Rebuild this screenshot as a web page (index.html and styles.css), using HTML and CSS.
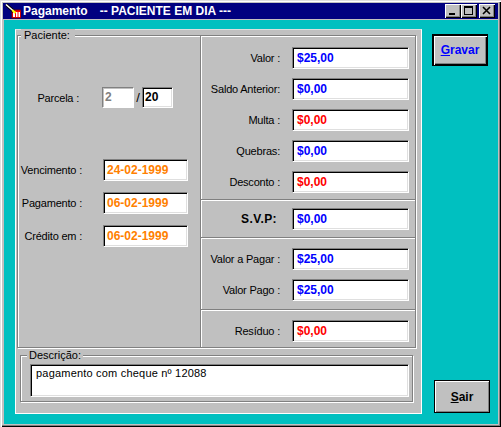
FILE: index.html
```html
<!DOCTYPE html>
<html lang="pt">
<head>
<meta charset="utf-8">
<title>Pagamento</title>
<link rel="stylesheet" href="styles.css">
</head>
<body>
<div class="window">
  <div class="titlebar">
    <svg class="app-icon" width="16" height="16" viewBox="0 0 16 16">
      <rect x="7" y="7" width="9" height="8" fill="#ff0000"/>
      <rect x="7" y="7" width="9" height="8" fill="none" stroke="#800000" stroke-width="0.8"/>
      <rect x="8" y="9" width="2" height="5" fill="#fff"/>
      <rect x="11" y="9" width="1.5" height="5" fill="#fff"/>
      <rect x="13.5" y="9" width="1.5" height="5" fill="#fff"/>
      <path d="M1 1.5 L9 8.5" stroke="#000" stroke-width="3.2"/>
      <path d="M1 1.5 L9 8.5" stroke="#fff" stroke-width="1.6"/>
      <path d="M7.5 7.2 L10.5 10" stroke="#ffff00" stroke-width="2.2"/>
    </svg>
    <span class="title">Pagamento</span>
    <span class="title subtitle">-- PACIENTE EM DIA ---</span>
    <div class="caption-buttons">
      <span class="cap-btn"><svg width="16" height="14" viewBox="0 0 16 14"><rect x="4" y="9" width="6" height="2" fill="#000"/></svg></span>
      <span class="cap-btn"><svg width="16" height="14" viewBox="0 0 16 14"><rect x="3.5" y="2.5" width="8" height="8" fill="none" stroke="#000"/><rect x="3" y="2" width="9" height="2" fill="#000"/></svg></span>
      <span class="cap-btn close"><svg width="16" height="14" viewBox="0 0 16 14"><path d="M4 3 L11 10 M11 3 L4 10" stroke="#000" stroke-width="1.6"/></svg></span>
    </div>
  </div>
  <div class="client">
    <div class="panel">
      <div class="group paciente">
        <span class="legend">Paciente:</span>
        <div class="left-col">
          <div class="lrow parcela-row">
            <span class="lbl">Parcela :</span>
            <div class="field small disabled">2</div>
            <span class="slash">/</span>
            <div class="field small">20</div>
          </div>
          <div class="lrow date-row vence">
            <span class="lbl">Vencimento :</span>
            <div class="field date orange">24-02-1999</div>
          </div>
          <div class="lrow date-row">
            <span class="lbl">Pagamento :</span>
            <div class="field date orange">06-02-1999</div>
          </div>
          <div class="lrow date-row">
            <span class="lbl">Crédito em :</span>
            <div class="field date orange">06-02-1999</div>
          </div>
        </div>
        <div class="right-col">
          <div class="sec sec1">
            <div class="frow"><span class="lbl">Valor :</span><div class="field money blue">$25,00</div></div>
            <div class="frow"><span class="lbl">Saldo Anterior:</span><div class="field money blue">$0,00</div></div>
            <div class="frow"><span class="lbl">Multa :</span><div class="field money red">$0,00</div></div>
            <div class="frow"><span class="lbl">Quebras:</span><div class="field money blue">$0,00</div></div>
            <div class="frow"><span class="lbl">Desconto :</span><div class="field money red">$0,00</div></div>
          </div>
          <div class="sec sec2">
            <div class="frow"><span class="lbl bold">S.V.P:</span><div class="field money blue">$0,00</div></div>
          </div>
          <div class="sec sec3">
            <div class="frow"><span class="lbl">Valor a Pagar :</span><div class="field money blue">$25,00</div></div>
            <div class="frow"><span class="lbl">Valor Pago :</span><div class="field money blue">$25,00</div></div>
          </div>
          <div class="sec sec4">
            <div class="frow"><span class="lbl">Resíduo :</span><div class="field money red">$0,00</div></div>
          </div>
        </div>
      </div>
      <div class="group descricao">
        <span class="legend">Descrição:</span>
        <div class="memo">pagamento com cheque nº 12088</div>
      </div>
    </div>
    <div class="side">
      <button class="btn gravar"><u>G</u>ravar</button>
      <button class="btn sair"><u>S</u>air</button>
    </div>
  </div>
</div>
</body>
</html>
```
FILE: styles.css
```css
html, body {
  margin: 0;
  padding: 0;
}
body {
  background: #808080;
  font-family: "Liberation Sans", Arial, sans-serif;
  font-size: 11px;
  color: #000;
}
.window {
  width: 501px;
  height: 427px;
  box-sizing: border-box;
  padding: 3px;
  background: #c0c0c0;
  box-shadow: inset 1px 1px 0 #dfdfdf, inset 2px 2px 0 #fff, inset -1px -1px 0 #000, inset -2px -2px 0 #808080;
  display: flex;
  flex-direction: column;
}
.titlebar {
  height: 16px;
  flex: none;
  background: #000080;
  color: #fff;
  display: flex;
  align-items: center;
  padding: 0 3px 0 2px;
}
.app-icon {
  flex: none;
  margin-right: 2px;
}
.title {
  font-weight: bold;
  font-size: 12px;
  line-height: 16px;
  white-space: pre;
}
.subtitle {
  margin-left: 12px;
}
.caption-buttons {
  margin-left: auto;
  display: flex;
}
.cap-btn {
  width: 16px;
  height: 14px;
  background: #c0c0c0;
  box-shadow: inset 1px 1px 0 #fff, inset -1px -1px 0 #000, inset -2px -2px 0 #808080;
  display: block;
}
.cap-btn svg {
  display: block;
}
.cap-btn.close {
  margin-left: 2px;
}
.client {
  flex: 1;
  margin: 1px 0 0 1px;
  background: #00c0c0;
  display: flex;
  padding: 9px 0 0 11px;
}
.panel {
  width: 407px;
  box-sizing: border-box;
  border: 1px solid #fff;
  border-top-color: #dfdfdf;
  background: #c0c0c0;
  padding: 5px 0 11px 1px;
  align-self: flex-start;
}
.group {
  position: relative;
  box-sizing: border-box;
  border: 1px solid #808080;
  box-shadow: inset 1px 1px 0 #fff, 1px 1px 0 #fff;
}
.legend {
  position: absolute;
  background: #c0c0c0;
  line-height: 13px;
  font-size: 11px;
  white-space: nowrap;
}
.paciente {
  width: 399px;
  height: 313px;
  display: flex;
}
.paciente .legend {
  top: -7px;
  left: 3px;
  padding: 0 5px 0 3px;
}
.left-col {
  width: 182px;
  flex: none;
  display: flex;
  flex-direction: column;
}
.lbl {
  letter-spacing: -0.2px;
}
.lrow {
  display: flex;
  align-items: center;
}
.lrow .lbl {
  width: 64px;
  flex: none;
  text-align: right;
  white-space: nowrap;
}
.parcela-row {
  margin-top: 51px;
}
.parcela-row .lbl {
  box-sizing: border-box;
  padding-right: 3px;
}
.parcela-row .field:first-of-type {
  margin-left: 20px;
}
.field.small {
  height: 21px;
  line-height: 19px;
  padding-left: 2px;
  color: #000;
}
.field.small.disabled {
  width: 32px;
  color: #808080;
  box-shadow: inset 1px 1px 0 #c0c0c0;
}
.field.small:not(.disabled) {
  width: 31px;
}
.slash {
  width: 8px;
  text-align: center;
  font-size: 13px;
}
.date-row {
  margin-top: 11px;
}
.date-row.vence {
  margin-top: 51px;
}
.field.date {
  width: 85px;
  margin-left: 21px;
  padding-left: 3px;
}
.right-col {
  flex: 1;
  display: flex;
  flex-direction: column;
}
.sec {
  border-left: 1px solid #808080;
  box-shadow: inset 1px 0 0 #fff;
  display: flex;
  flex-direction: column;
  gap: 9px;
}
.sec + .sec {
  border-top: 1px solid #808080;
  box-shadow: inset 1px 1px 0 #fff;
}
.sec1 { padding: 11px 0 6px; }
.sec2 { padding: 8px 0 7px; }
.sec3 { padding: 10px 0 8px; }
.sec4 { padding: 10px 0 0; flex: 1; }
.frow {
  display: flex;
  align-items: center;
  height: 22px;
}
.frow .lbl {
  width: 79px;
  flex: none;
  text-align: right;
  white-space: nowrap;
}
.lbl.bold {
  font-weight: bold;
  font-size: 12px;
  letter-spacing: 0.4px;
  padding-right: 3px;
  box-sizing: border-box;
}
.field {
  box-sizing: border-box;
  height: 22px;
  background: #fff;
  border-style: solid;
  border-width: 1px;
  border-color: #808080 #fff #fff #808080;
  box-shadow: inset 1px 1px 0 #000, inset -1px -1px 0 #dfdfdf;
  font-weight: bold;
  font-size: 12px;
  line-height: 20px;
  white-space: nowrap;
  flex: none;
}
.field.money {
  width: 117px;
  margin-left: 12px;
  padding-left: 4px;
}
.blue { color: #0000ff; }
.red { color: #ff0000; }
.orange { color: #ff8000; }
.descricao {
  width: 393px;
  height: 47px;
  margin: 7px 0 0 3px;
  padding: 8px 0 0 9px;
}
.descricao .legend {
  top: -7px;
  left: 6px;
  padding: 0 2px;
}
.memo {
  width: 379px;
  height: 33px;
  box-sizing: border-box;
  background: #fff;
  border-style: solid;
  border-width: 1px;
  border-color: #808080 #fff #fff #808080;
  box-shadow: inset 1px 1px 0 #000, inset -1px -1px 0 #dfdfdf;
  padding: 2px 0 0 5px;
  line-height: 13px;
  font-size: 11px;
  letter-spacing: 0.2px;
}
.side {
  display: flex;
  flex-direction: column;
  align-items: flex-start;
  margin-left: 10px;
  padding-top: 5px;
}
.btn {
  width: 56px;
  height: 32px;
  padding: 0;
  margin: 0;
  font-family: "Liberation Sans", Arial, sans-serif;
  font-weight: bold;
  font-size: 12px;
  background: #c0c0c0;
  border: 1px solid #000;
  box-shadow: inset 1px 1px 0 #fff, inset -1px -1px 0 #808080;
  color: #000;
}
.gravar {
  color: #0000ff;
  box-shadow: inset 1px 1px 0 #000, inset 2px 2px 0 #fff, inset -1px -1px 0 #000, inset -2px -2px 0 #808080;
}
.sair {
  height: 33px;
  margin-top: auto;
  margin-bottom: 11px;
  margin-left: 2px;
}
```
